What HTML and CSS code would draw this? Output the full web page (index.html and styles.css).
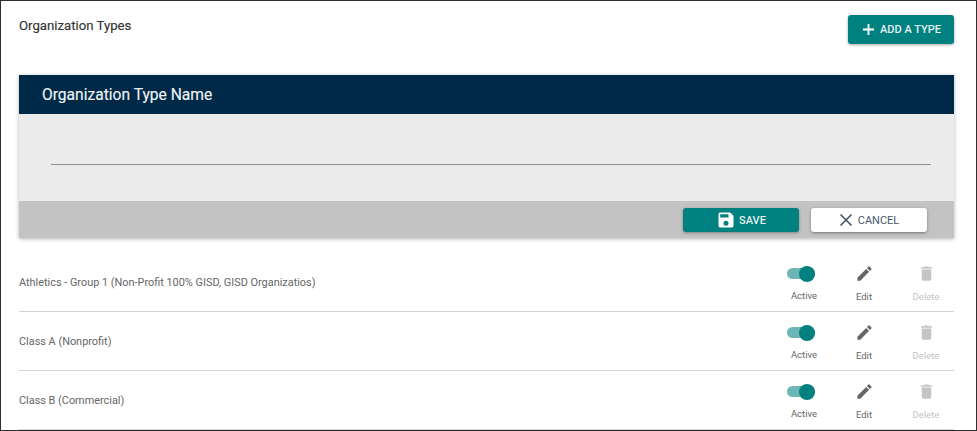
FILE: index.html
```html
<!DOCTYPE html>
<html lang="en">
<head>
<meta charset="utf-8">
<title>Organization Types</title>
<link rel="stylesheet" href="styles.css">
</head>
<body>
<main class="frame">
  <header class="top">
    <h1 class="title">Organization Types</h1>
    <button class="btn btn-teal btn-add" type="button">
      <svg class="ico-plus" viewBox="0 0 14 14" width="13" height="13"><path d="M7 1v12M1 7h12" stroke="#fff" stroke-width="2" fill="none"/></svg>
      <span>ADD A TYPE</span>
    </button>
  </header>
  <section class="panel">
    <div class="panel-head">Organization Type Name</div>
    <div class="panel-body"><div class="field-line"></div></div>
    <div class="panel-foot">
      <button class="btn btn-teal btn-foot" type="button">
        <svg viewBox="0 0 24 24" width="20" height="20"><path fill="#fff" d="M17 3H5a2 2 0 0 0-2 2v14a2 2 0 0 0 2 2h14a2 2 0 0 0 2-2V7l-4-4zm-5 16a3 3 0 1 1 0-6 3 3 0 0 1 0 6zm3-10H5V5h10v4z"/></svg>
        <span>SAVE</span>
      </button>
      <button class="btn btn-white btn-foot" type="button">
        <svg viewBox="0 0 14 14" width="14" height="14"><path d="M1.5 1.5l11 11M12.5 1.5l-11 11" stroke="#3d4f63" stroke-width="1.5" fill="none"/></svg>
        <span>CANCEL</span>
      </button>
    </div>
  </section>
  <ul class="list">
    <li class="row">
      <span class="row-name">Athletics - Group 1 (Non-Profit 100% GISD, GISD Organizatios)</span>
      <div class="actions">
        <div class="action action-toggle"><span class="toggle"><span class="knob"></span></span><span class="lbl">Active</span></div>
        <div class="action action-edit"><svg viewBox="0 0 24 24" width="19" height="19"><path fill="#666" d="M3 17.25V21h3.75L17.81 9.94l-3.75-3.75L3 17.25zM20.71 7.04a1 1 0 0 0 0-1.41l-2.34-2.34a1 1 0 0 0-1.41 0l-1.83 1.83 3.75 3.75 1.83-1.83z"/></svg><span class="lbl">Edit</span></div>
        <div class="action action-del"><svg viewBox="0 0 24 24" width="19" height="19"><path fill="#c4c4c4" d="M6 19a2 2 0 0 0 2 2h8a2 2 0 0 0 2-2V7H6v12zM19 4h-3.5l-1-1h-5l-1 1H5v2h14V4z"/></svg><span class="lbl lbl-off">Delete</span></div>
      </div>
    </li>
    <li class="row">
      <span class="row-name">Class A (Nonprofit)</span>
      <div class="actions">
        <div class="action action-toggle"><span class="toggle"><span class="knob"></span></span><span class="lbl">Active</span></div>
        <div class="action action-edit"><svg viewBox="0 0 24 24" width="19" height="19"><path fill="#666" d="M3 17.25V21h3.75L17.81 9.94l-3.75-3.75L3 17.25zM20.71 7.04a1 1 0 0 0 0-1.41l-2.34-2.34a1 1 0 0 0-1.41 0l-1.83 1.83 3.75 3.75 1.83-1.83z"/></svg><span class="lbl">Edit</span></div>
        <div class="action action-del"><svg viewBox="0 0 24 24" width="19" height="19"><path fill="#c4c4c4" d="M6 19a2 2 0 0 0 2 2h8a2 2 0 0 0 2-2V7H6v12zM19 4h-3.5l-1-1h-5l-1 1H5v2h14V4z"/></svg><span class="lbl lbl-off">Delete</span></div>
      </div>
    </li>
    <li class="row">
      <span class="row-name">Class B (Commercial)</span>
      <div class="actions">
        <div class="action action-toggle"><span class="toggle"><span class="knob"></span></span><span class="lbl">Active</span></div>
        <div class="action action-edit"><svg viewBox="0 0 24 24" width="19" height="19"><path fill="#666" d="M3 17.25V21h3.75L17.81 9.94l-3.75-3.75L3 17.25zM20.71 7.04a1 1 0 0 0 0-1.41l-2.34-2.34a1 1 0 0 0-1.41 0l-1.83 1.83 3.75 3.75 1.83-1.83z"/></svg><span class="lbl">Edit</span></div>
        <div class="action action-del"><svg viewBox="0 0 24 24" width="19" height="19"><path fill="#c4c4c4" d="M6 19a2 2 0 0 0 2 2h8a2 2 0 0 0 2-2V7H6v12zM19 4h-3.5l-1-1h-5l-1 1H5v2h14V4z"/></svg><span class="lbl lbl-off">Delete</span></div>
      </div>
    </li>
  </ul>
</main>
</body>
</html>
```

FILE: styles.css
```css
* { box-sizing: border-box; }
html, body { margin: 0; padding: 0; height: 100%; overflow: hidden; background: #fff; }
body { font-family: Roboto, "Liberation Sans", sans-serif; }
.frame {
  width: 977px;
  height: 431px;
  border: 1px solid #2e2e2e;
  padding: 0 22px 0 18px;
  overflow: hidden;
}
.top {
  display: flex;
  justify-content: space-between;
  align-items: flex-start;
  height: 74px;
  padding-top: 14px;
}
.title {
  margin: 2px 0 0;
  font-size: 13.2px;
  line-height: 17px;
  font-weight: 400;
  color: #333;
  -webkit-text-stroke: 0.15px #333;
}
.btn {
  display: flex;
  align-items: center;
  justify-content: center;
  border: 0;
  border-radius: 3px;
  font-family: inherit;
  font-weight: 500;
  font-size: 11px;
  padding: 0;
}
.btn-teal { background: #00807f; color: #e3f1f1; box-shadow: 0 1px 3px rgba(0,0,0,.35); }
.btn-white { background: #fff; color: #46586c; font-weight: 400; gap: 5px; box-shadow: 0 1px 3px rgba(0,0,0,.4); }
.btn-add { width: 106px; height: 29px; gap: 5px; padding-left: 1px; }
.panel { box-shadow: 0 1px 4px rgba(0,0,0,.3); }
.panel-head {
  height: 39px;
  background: #002947;
  color: #eef2f5;
  font-size: 15.6px;
  font-weight: 400;
  line-height: 41px;
  padding-left: 23px;
  -webkit-text-stroke: 0.15px #eef2f5;
}
.panel-body { height: 87px; background: #ececec; padding: 50px 23px 0 32px; }
.field-line { height: 1px; background: #8f8f8f; }
.panel-foot {
  height: 37px;
  background: #c3c3c3;
  display: flex;
  justify-content: flex-end;
  align-items: flex-start;
  gap: 12px;
  padding: 7px 27px 0 0;
}
.btn-foot { width: 116px; height: 24px; }
.btn-foot.btn-teal { gap: 3px; }
.list { list-style: none; margin: 15px 0 0; padding: 0; }
.row {
  height: 59px;
  border-bottom: 1px solid #d4d4d4;
  display: flex;
  justify-content: space-between;
}
.row-name { font-size: 10.9px; color: #666; line-height: 13px; padding-top: 23px; }
.actions { display: flex; padding-top: 10px; }
.action { display: flex; flex-direction: column; align-items: center; }
.action-toggle { width: 58px; }
.action-edit { width: 62px; }
.action-del { width: 62px; margin-right: -3px; }
.toggle {
  display: block;
  position: relative;
  width: 28px;
  height: 11px;
  margin: 5px 6px 11px 0;
  border-radius: 6px;
  background: #6db6b5;
}
.knob {
  position: absolute;
  right: 0;
  top: -2.5px;
  width: 16px;
  height: 16px;
  border-radius: 50%;
  background: #00807f;
}
.lbl { font-size: 9.5px; line-height: 12px; color: #666; }
.action-edit svg, .action-del svg { margin-top: 1px; margin-bottom: 5px; }
.action-edit .lbl, .action-del .lbl { margin-top: 3px; }
.lbl-off { color: #c4c4c4; }
```
